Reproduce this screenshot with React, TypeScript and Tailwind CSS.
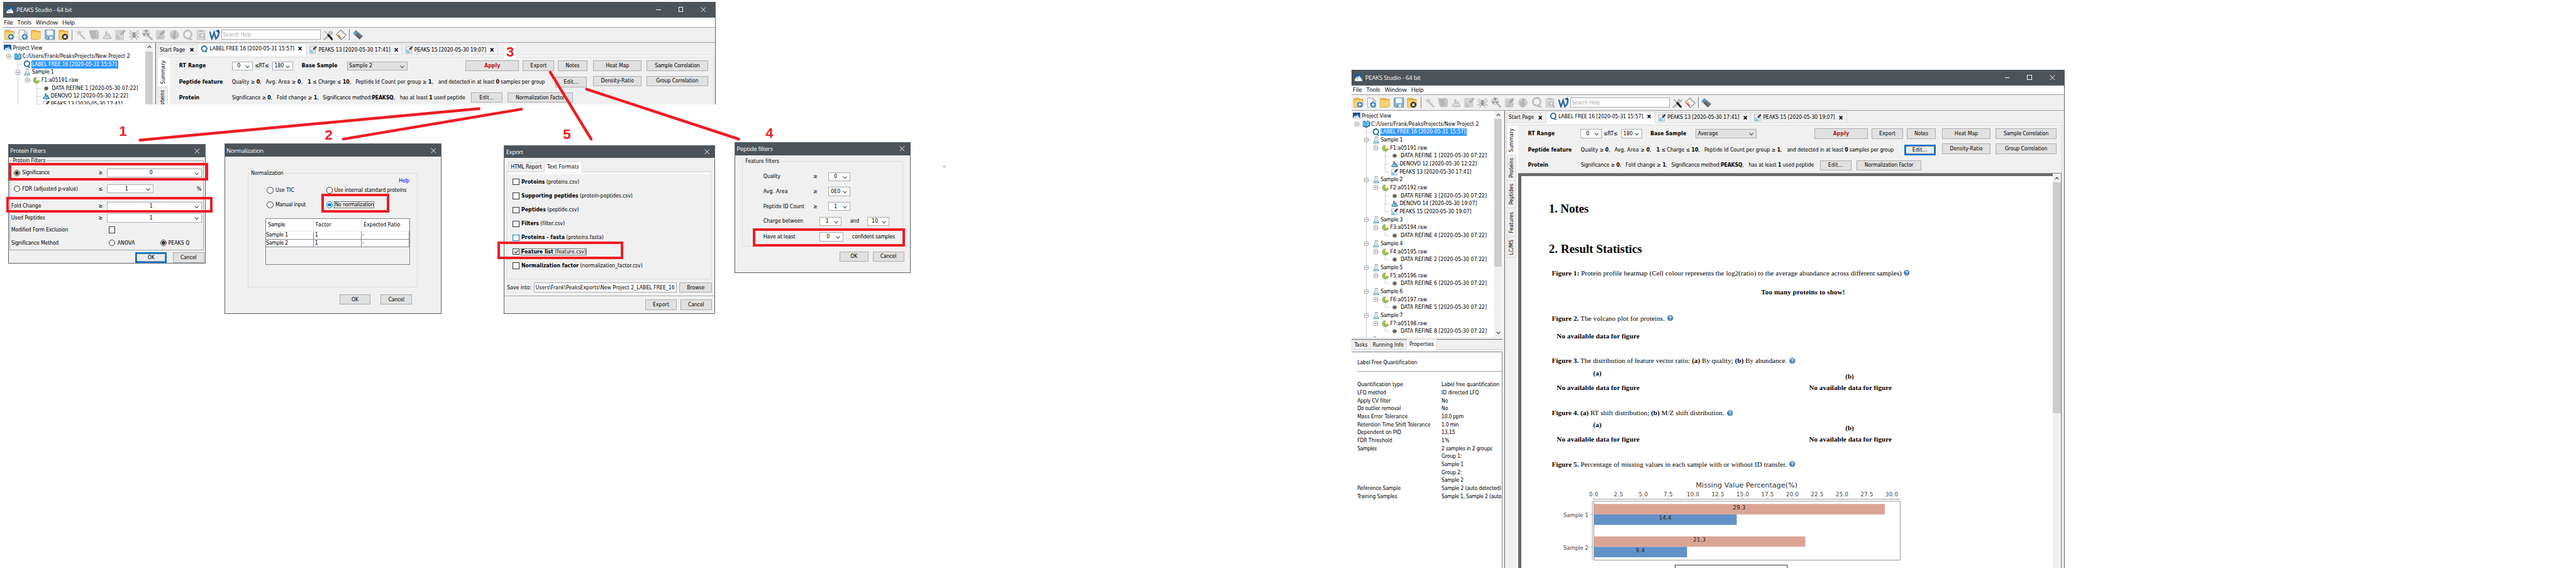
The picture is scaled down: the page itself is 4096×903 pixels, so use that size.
import React, { useLayoutEffect, useRef } from "react";

/* ---------- text ---------- */

// Text set to a given width by adjusting its tracking.
function T({ w, className = "", children }: { w?: number; className?: string; children: React.ReactNode }) {
  const ref = useRef<HTMLSpanElement>(null);
  useLayoutEffect(() => {
    const el = ref.current;
    const root = document.getElementById("canvas");
    if (!el || !root || !w) return;
    el.style.letterSpacing = "0px";
    const k = root.getBoundingClientRect().width / 5168;
    const natural = el.getBoundingClientRect().width / k;
    const n = (el.textContent || "").length;
    if (n > 1) el.style.letterSpacing = `${(w - natural) / n}px`;
  }, [w, children]);
  return (
    <span ref={ref} className={`inline-block shrink-0 whitespace-pre ${className}`}>
      {children}
    </span>
  );
}

/* ---------- small controls ---------- */

function Chevron() {
  return (
    <svg width="9" height="6" viewBox="0 0 9 6" className="mt-[3px] mr-[5px] shrink-0">
      <path d="M0.8 0.8 L4.5 4.6 L8.2 0.8" fill="none" stroke="#444" strokeWidth="1.3" />
    </svg>
  );
}

function Combo({ className, value, grey, left }: { className: string; value: string; grey?: boolean; left?: boolean }) {
  return (
    <div className={`flex h-[18px] shrink-0 items-center border border-[#abadb3] ${grey ? "bg-[#e1e1e1]" : "bg-white"} ${className}`}>
      <span className={`grow whitespace-nowrap ${left ? "pl-[3px]" : "text-center"}`}>{value}</span>
      <Chevron />
    </div>
  );
}

function Btn({ className, children, focus }: { className: string; children: React.ReactNode; focus?: boolean }) {
  if (focus)
    return (
      <div className={`flex h-[21px] shrink-0 border-[2.6px] border-[#0078d7] bg-[#e5edf5] ${className}`}>
        <div className="flex grow items-center justify-center border border-dotted border-black">{children}</div>
      </div>
    );
  return (
    <div className={`flex h-[21px] shrink-0 items-center justify-center border border-[#adadad] bg-[#e1e1e1] ${className}`}>{children}</div>
  );
}

function Radio({ on, blue }: { on?: boolean; blue?: boolean }) {
  return (
    <span className={`flex h-[13px] w-[13px] shrink-0 items-center justify-center rounded-full border bg-white ${blue ? "border-[#0078d7]" : "border-[#333]"}`}>
      {on && <span className={`h-[7px] w-[7px] rounded-full ${blue ? "bg-[#0078d7]" : "bg-[#333]"}`} />}
    </span>
  );
}

function Check({ on, blue }: { on?: boolean; blue?: boolean }) {
  return (
    <span className={`flex h-[13px] w-[13px] shrink-0 items-center justify-center border bg-white ${blue ? "border-[#0078d7]" : "border-[#333]"}`}>
      {on && (
        <svg width="10" height="8" viewBox="0 0 10 8" className="shrink-0">
          <path d="M0.8 4 L3.6 6.8 L9.4 0.8" fill="none" stroke="#222" strokeWidth="1.5" />
        </svg>
      )}
    </span>
  );
}

function TabX() {
  return (
    <svg width="8" height="8" viewBox="0 0 8 8" className="shrink-0">
      <path d="M1 0.8 L7 7.2 M7 0.8 L1 7.2" stroke="#000" strokeWidth="2.1" />
    </svg>
  );
}

/* ---------- icons ---------- */

function Mountain({ s = 15 }: { s?: number }) {
  return (
    <svg width={s} height={s} viewBox="0 0 16 16" className="shrink-0">
      <rect width="16" height="16" fill="#dce9f2" />
      <path d="M0 0H16V13L10 4L7 8L5 6L0 12Z" fill="#1c5a94" />
      <path d="M0 16L5 8L7 11L10 5L16 16Z" fill="#f2f7fa" />
      <path d="M5 8L7 11L6 13L4 11Z M10 5L12.5 10L10.5 9L9 11Z" fill="#8fb7d4" />
    </svg>
  );
}

function QIcon({ grey, s = 16 }: { grey?: boolean; s?: number }) {
  return (
    <svg width={s} height={s} viewBox="0 0 16 16" className="shrink-0">
      <ellipse cx="7.8" cy="7.2" rx="5.6" ry="5.8" fill="none" stroke={grey ? "#c0c0c0" : "#2b6a97"} strokeWidth="2.6" />
      <path d="M8.5 12.5 Q11 15.4 14.6 14.2" fill="none" stroke={grey ? "#c0c0c0" : "#2f7fa8"} strokeWidth="2.2" />
    </svg>
  );
}

function PeaksIcon({ grey, s = 15 }: { grey?: boolean; s?: number }) {
  return (
    <svg width={s} height={s} viewBox="0 0 16 16" className="shrink-0">
      <rect x="1" y="1.5" width="12" height="14" fill={grey ? "#d6d6d6" : "#f6f9fa"} stroke={grey ? "#c6c6c6" : "#8f9a9f"} />
      <path d="M2 15V8L8 9L10 12L7 15Z" fill={grey ? "#c4c4c4" : "#7cc8ea"} />
      <path d="M5 10L8 7L10 9.4L8.4 12Z" fill={grey ? "#d9d9d9" : "#d9eef8"} />
      <path d="M7 6L14 0L16 2.6L9.5 9.6Z" fill={grey ? "#b4b4b4" : "#474c50"} />
    </svg>
  );
}

function DenovoIcon({ grey, s = 14 }: { grey?: boolean; s?: number }) {
  return (
    <svg width={s} height={s} viewBox="0 0 16 16" className="shrink-0">
      <path d="M0.5 14L3 9L5 10V4Q6 0 8 3V9L11 5L12.5 9L15.5 14Q8 16.5 0.5 14Z" fill={grey ? "#c6c6c6" : "#3787b7"} stroke={grey ? "#bababa" : "#1f5f8b"} strokeWidth="0.6" />
      <path d="M4 13V11H6V13Z M6.5 13V9 M9 13.4V10.2Q10.4 9 11 11V13.4" fill="none" stroke={grey ? "#e8e8e8" : "#d6edf8"} strokeWidth="1.2" />
    </svg>
  );
}

function BookIcon() {
  return (
    <svg width="16" height="15" viewBox="0 0 16 15" className="shrink-0">
      <path d="M1 2L6 1L8 4L11 0L15 3V11L8 15L1 11Z" fill="#2b7fb4" />
      <path d="M1 2Q6 2 7.6 5V13L1 10.6Z" fill="#5eb4e4" />
      <path d="M8.4 5Q10 2 13.6 2V10L8.4 13Z" fill="#79c3ea" />
      <path d="M14 3L15.5 4V11L8 15L1 12" fill="none" stroke="#173f5b" />
    </svg>
  );
}

function FlaskIcon() {
  return (
    <svg width="13" height="14" viewBox="0 0 13 14" className="shrink-0">
      <path d="M3.2 8.5L1 13H12L9.6 8.5Z" fill="#8fdcf8" />
      <path d="M4 0.6H9 M4.8 0.6V5.5L0.8 13.3H12.2L8.2 5.5V0.6" fill="none" stroke="#6b7378" strokeWidth="0.9" />
    </svg>
  );
}

function RawIcon() {
  return (
    <svg width="15" height="14" viewBox="0 0 15 14" className="shrink-0">
      <path d="M7.4 0A7 7 0 1 0 14.5 7.6H7.4Z" fill="#9cbd5c" />
    </svg>
  );
}

function DotIcon() {
  return (
    <svg width="9" height="9" viewBox="0 0 9 9" className="mx-[3px] shrink-0">
      <circle cx="4.5" cy="4.5" r="3.9" fill="#666" />
      <path d="M0.2 4.5H8.8" stroke="#666" strokeWidth="1.6" />
    </svg>
  );
}

function Help() {
  return (
    <svg width="12" height="12" viewBox="0 0 12 12" className="mb-[2px] shrink-0">
      <circle cx="6" cy="6" r="6" fill="#4d85b8" />
      <path d="M4.1 4.5Q4.2 2.7 6 2.7T7.9 4.4Q7.9 5.4 6.8 6T6.1 7.4M6.1 8.4V9.9" fill="none" stroke="#fff" strokeWidth="1.4" />
    </svg>
  );
}

function ToolIcon({ kind, className }: { kind: string; className: string }) {
  let art: React.ReactNode = null;
  const folder = (
    <>
      <path d="M1 3Q1 1.5 2.5 1.5H11L13 3.5H19V18.5Q10 21 1 19.5Z" fill="#f0b83c" stroke="#b98420" strokeWidth="0.8" />
      <path d="M1.5 6Q10 4 18.5 6V18.5Q10 20 1.5 19Z" fill="#fbd36e" />
    </>
  );
  const plus = (
    <>
      <circle cx="13" cy="14.5" r="6" fill="#2f6fb0" stroke="#e8f1f9" strokeWidth="0.8" />
      <path d="M13 11V18M9.5 14.5H16.5" stroke="#fff" strokeWidth="2.2" />
    </>
  );
  if (kind === "open") art = <>{folder}{plus}</>;
  if (kind === "new")
    art = (
      <>
        <path d="M2 1H12L18 7V20H2Z" fill="#fafafa" stroke="#888" strokeWidth="0.9" />
        <path d="M12 1V7H18Z" fill="#ddd" stroke="#888" strokeWidth="0.7" />
        {plus}
      </>
    );
  if (kind === "folder") art = folder;
  if (kind === "save")
    art = (
      <>
        <path d="M1 1H20V20H3L1 18Z" fill="#8cb9da" stroke="#39688c" strokeWidth="0.9" />
        <rect x="4.5" y="1.5" width="12" height="9.5" fill="#f4f8fa" />
        <rect x="5.5" y="13.5" width="10" height="6.5" fill="#e4e8ea" stroke="#5a7b91" strokeWidth="0.6" />
        <rect x="7" y="14.5" width="2.4" height="5" fill="#3f6d8f" />
      </>
    );
  if (kind === "close")
    art = (
      <>
        {folder}
        <circle cx="13" cy="14.5" r="6" fill="#33332c" />
        <path d="M10.6 12.1L15.4 16.9M15.4 12.1L10.6 16.9" stroke="#fff" strokeWidth="2.1" />
      </>
    );
  if (kind === "wand")
    art = (
      <>
        <path d="M8 8L19 19" stroke="#bdbdbd" strokeWidth="3" />
        <path d="M7 0L9 4L14 3L11 7L13 11L8 9.5L4 12L4.5 7.5L1 4.5L5.5 4Z" fill="#cccccc" />
      </>
    );
  if (kind === "books")
    art = (
      <>
        <path d="M1 3L5 1L9 14V20L5 17Z M6 3L10 1L13 14V20L9.5 17Z M11 3L15 1L17 13V19L14 17Z" fill="#bbb" stroke="#a4a4a4" strokeWidth="0.6" />
        <path d="M15 1L20 4V17L17 20L13 5Z" fill="#c9c9c9" stroke="#a9a9a9" strokeWidth="0.6" />
      </>
    );
  if (kind === "spider")
    art = (
      <>
        <ellipse cx="10.5" cy="12" rx="3.2" ry="4.4" fill="#9a9a9a" />
        <circle cx="10.5" cy="6.8" r="2.3" fill="#9a9a9a" />
        <path d="M9 8L5 5L2 2M12 8L16 5L19 2M8 10L4 9L0 6.5M13 10L17 9L21 6.5M8 12.5L4 13L0.5 16M13 12.5L17 13L20.5 16M9 15L6 17L5 20.5M12 15L15 17L16 20.5" fill="none" stroke="#9a9a9a" strokeWidth="1.3" />
      </>
    );
  if (kind === "radio")
    art = (
      <>
        <path d="M12 12L19.5 19.5" stroke="#b3b3b3" strokeWidth="3.6" strokeLinecap="round" />
        <circle cx="8" cy="7.5" r="7" fill="#d9d9d9" stroke="#bdbdbd" />
        <path d="M8 7.5L4.6 1.8A6.6 6.6 0 0 1 11.4 1.8ZM8 7.5L1.4 8A6.6 6.6 0 0 0 4.6 13.2ZM8 7.5L14.6 8A6.6 6.6 0 0 1 11.4 13.2Z" fill="#9c9c9c" />
      </>
    );
  if (kind === "ptm")
    art = (
      <>
        <rect x="1" y="2" width="17" height="18" fill="#d0d0d0" />
        <path d="M8 9L16 1L20 4L12 13Z" fill="#aaa" />
        <path d="M3 18L8 11L14 16L10 20Z M14 20V13H20" fill="#bdbdbd" stroke="#c8c8c8" />
      </>
    );
  if (kind === "music")
    art = (
      <>
        <circle cx="10.5" cy="10.5" r="9.5" fill="#cbcbcb" />
        <path d="M11 2V18Q11 20 9 19M11 3Q14 4 11.5 7Q6 10 6.5 13.5Q8 17 12 16Q15 14 13 11.5Q10 10.5 9.5 13" fill="none" stroke="#a5a5a5" strokeWidth="1.4" />
      </>
    );
  if (kind === "clip")
    art = (
      <>
        <path d="M2 3H17V20H2Z" fill="#e0e0e0" stroke="#bdbdbd" strokeWidth="1.6" />
        <rect x="6" y="1" width="7" height="4" fill="#bdbdbd" />
        <circle cx="12" cy="12" r="3.8" fill="#ececec" stroke="#adadad" strokeWidth="1.5" />
        <path d="M14.5 15L19 20M5 9H8M5 12H7M5 15H8" stroke="#b3b3b3" strokeWidth="1.8" />
      </>
    );
  if (kind === "w")
    art = (
      <>
        <path d="M0.5 4L5 18.5L9.5 6L13 18.5Q21 11 17.5 3" fill="none" stroke="#2a6d9e" strokeWidth="3.1" />
        <path d="M11.5 3L18.5 0L21 6.5L17.5 4.8Z" fill="#1a4f7b" />
      </>
    );
  if (kind === "tools")
    art = (
      <>
        <path d="M2 19.5L12 9.5Q11 5 15 2.5L16 6L19 5.5L20 3Q22 9 15 11L5 20.5Z" fill="#c9c9c9" stroke="#6f6f6f" strokeWidth="0.7" />
        <path d="M4 3L12 12" stroke="#999" strokeWidth="1.6" />
        <path d="M11.5 11L19 19.5" stroke="#1f1f1f" strokeWidth="4" strokeLinecap="round" />
      </>
    );
  if (kind === "eraser")
    art = (
      <>
        <path d="M10 1L20.5 11L11 20.5L1 9.5Z" fill="#fbfbfb" stroke="#333" strokeWidth="1.1" />
        <path d="M5 9.5L11 16.5L9.5 18L3.5 11Z" fill="#e8503a" />
        <path d="M6.2 8.2L8 10L6 13L4 11Z" fill="#f5b93a" />
        <path d="M10 4L17.5 11" stroke="#888" strokeWidth="0.7" />
      </>
    );
  if (kind === "calc")
    art = (
      <>
        <path d="M6 1.5L20 13L13.5 20L1 8Z" fill="#8d9499" stroke="#5b6267" strokeWidth="0.7" />
        <path d="M6.2 3L9.5 5.6L4.4 10.2L2 8Z" fill="#4da0dc" />
        <path d="M10.2 6.5L18.5 13.2L13.4 18.6L5.4 11Z" fill="#4a5257" />
        <path d="M8.4 9.3L15.6 16M10.6 7.6L17.4 13.8M9 13L13.4 8.6M11.8 15.6L16.2 11.2" stroke="#b9c0c4" strokeWidth="0.7" />
      </>
    );
  if (kind === "q") return <span className={className}><QIcon grey s={22} /></span>;
  if (kind === "peaks") return <span className={className}><PeaksIcon grey s={21} /></span>;
  if (kind === "denovo") return <span className={className}><DenovoIcon grey s={19} /></span>;
  return (
    <svg width="21" height="21" viewBox="0 0 21 21" className={`shrink-0 ${className}`}>
      {art}
    </svg>
  );
}

/* ---------- project tree ---------- */

function TreeCell({ kind }: { kind: string }) {
  const dash = { stroke: "#777", strokeWidth: 1, strokeDasharray: "1 1.4" };
  const box = "bBE".includes(kind);
  return (
    <svg width="19" height="16" viewBox="0 0 19 16" className="shrink-0">
      {"|TLBE".includes(kind) && <path d="M9.5 0V8" {...dash} />}
      {"|TB".includes(kind) && <path d="M9.5 8V16" {...dash} />}
      {"TLBEb".includes(kind) && <path d="M9.5 8.5H19" {...dash} />}
      {box && <rect x="5.5" y="4" width="8" height="8" rx="1" fill="#f7f7f7" stroke="#8e8f8f" />}
      {box && <path d="M7.3 8H11.7" stroke="#3c4f9a" />}
    </svg>
  );
}

type Row = { cells: string; icon: string; text: string; w: number; on?: boolean };
const leaf = (text: string, w: number, icon: string, last: boolean): Row => ({ cells: last ? " | L" : " | T", icon, text, w });
const sample = (n: number): Row => ({ cells: " B", icon: "flask", text: `Sample ${n}`, w: 44 });
const raw = (text: string): Row => ({ cells: " |E", icon: "raw", text, w: 74 });
const TREE: Row[] = [
  { cells: "b", icon: "book", text: "C:/Users/Frank/PeaksProjects/New Project 2", w: 216 },
  { cells: " T", icon: "q", text: "LABEL FREE 16 [2020-05-31 15:57]", w: 170, on: true },
  sample(1),
  raw("F1:a05191.raw"),
  leaf("DATA REFINE 1 [2020-05-30 07:22]", 173, "dot", false),
  leaf("DENOVO 12 [2020-05-30 12:22]", 155, "denovo", false),
  leaf("PEAKS 13 [2020-05-30 17:41]", 144, "peaks", true),
  sample(2),
  raw("F2:a05192.raw"),
  leaf("DATA REFINE 3 [2020-05-30 07:22]", 173, "dot", false),
  leaf("DENOVO 14 [2020-05-30 19:07]", 155, "denovo", false),
  leaf("PEAKS 15 [2020-05-30 19:07]", 144, "peaks", true),
  sample(3),
  raw("F3:a05194.raw"),
  leaf("DATA REFINE 4 [2020-05-30 07:22]", 173, "dot", true),
  sample(4),
  raw("F4:a05195.raw"),
  leaf("DATA REFINE 2 [2020-05-30 07:22]", 173, "dot", true),
  sample(5),
  raw("F5:a05196.raw"),
  leaf("DATA REFINE 6 [2020-05-30 07:22]", 173, "dot", true),
  sample(6),
  raw("F6:a05197.raw"),
  leaf("DATA REFINE 5 [2020-05-30 07:22]", 173, "dot", true),
  sample(7),
  raw("F7:a05198.raw"),
  leaf("DATA REFINE 8 [2020-05-30 07:22]", 173, "dot", true),
];

function Tree({ rows }: { rows: Row[] }) {
  return (
    <div className="grow overflow-hidden pt-[3px]">
      <div className="flex h-[16px] items-center gap-[3px] pl-[2px]">
        <Mountain />
        <T w={59}>Project View</T>
      </div>
      {rows.map((r, i) => (
        <div key={i} className="flex h-[16px] items-center pl-[1px]">
          {r.cells.split("").map((c, k) => (
            <TreeCell key={k} kind={c} />
          ))}
          <span className="ml-[1px] flex w-[17px] shrink-0 items-center justify-center">
            {r.icon === "book" && <BookIcon />}
            {r.icon === "q" && <QIcon s={15} />}
            {r.icon === "flask" && <FlaskIcon />}
            {r.icon === "raw" && <RawIcon />}
            {r.icon === "dot" && <DotIcon />}
            {r.icon === "denovo" && <DenovoIcon />}
            {r.icon === "peaks" && <PeaksIcon s={14} />}
          </span>
          <span className={`flex h-[16px] items-center pr-[3px] ${r.icon === "dot" ? "pl-[3px]" : "pl-[1px]"} ${r.on ? "bg-[#3399ff] text-white" : ""}`}>
            <T w={r.w}>{r.text}</T>
          </span>
        </div>
      ))}
      <div className="flex h-[4px] overflow-hidden pl-[1px]">
        <TreeCell kind=" " />
        <TreeCell kind="|" />
        <span className="mt-[2px] ml-[5px] h-[4px] w-[5px] bg-[#888]" />
      </div>
    </div>
  );
}

const PROPS: [string, number, string, number][] = [
  ["Quantification type", 92, "Label free quantification", 116],
  ["LFQ method", 58, "ID directed LFQ", 75],
  ["Apply CV filter", 67, "No", 13],
  ["Do outlier removal", 87, "No", 13],
  ["Mass Error Tolerance", 101, "10.0 ppm", 44],
  ["Retention Time Shift Tolerance", 147, "1.0 min", 34],
  ["Dependent on PID", 88, "13,15", 27],
  ["FDR Threshold", 70, "1%", 16],
  ["Samples", 39, "2 samples in 2 groups", 102],
  ["", 0, "Group 1:", 41],
  ["", 0, "Sample 1", 44],
  ["", 0, "Group 2:", 41],
  ["", 0, "Sample 2", 44],
  ["Reference Sample", 87, "Sample 2 (auto detected)", 120],
  ["Training Samples", 80, "Sample 1, Sample 2 (auto", 120],
];

function LeftPane({ compact }: { compact?: boolean }) {
  return (
    <div className="flex w-[302px] shrink-0 flex-col">
      <div className={`flex shrink-0 bg-white ${compact ? "h-[124px]" : "h-[454px]"}`}>
        <Tree rows={compact ? TREE.slice(0, 7) : TREE} />
        <div className="flex w-[15px] shrink-0 flex-col items-center bg-[#f0f0f0]">
          <div className="flex h-[17px] shrink-0 items-center">
            <svg width="9" height="6" viewBox="0 0 9 6"><path d="M1 5L4.5 1.4L8 5" fill="none" stroke="#505050" strokeWidth="1.7" /></svg>
          </div>
          <div className={`w-full bg-[#cdcdcd] ${compact ? "grow" : "h-[296px]"}`} />
          {!compact && (
            <div className="mt-auto flex h-[17px] items-center">
              <svg width="9" height="6" viewBox="0 0 9 6"><path d="M1 1L4.5 4.6L8 1" fill="none" stroke="#505050" strokeWidth="1.7" /></svg>
            </div>
          )}
        </div>
        <div className="w-[1px] shrink-0 bg-white" />
      </div>
      {!compact && (
        <>
          <div className="mt-[4px] h-[1px] shrink-0 bg-[#696969]" />
          <div className="flex h-[21px] shrink-0 items-end border-b border-[#d9d9d9] pt-[1px]">
            <div className="flex h-[18px] w-[37px] items-center justify-center border-t border-r border-l border-[#d9d9d9]"><T w={27}>Tasks</T></div>
            <div className="flex h-[18px] w-[72px] items-center justify-center border-t border-[#d9d9d9]"><T w={62}>Running Info</T></div>
            <div className="-mb-[1px] flex h-[21px] w-[62px] items-start justify-center border-t border-r border-l border-[#d9d9d9] bg-white pt-[2px]"><T w={49}>Properties</T></div>
          </div>
          <div className="mt-[3px] grow overflow-hidden border-t border-r border-[#828790] bg-white pl-[11px]">
            <div className="flex h-[40px] items-center border-b border-[#a0a0a0] pt-[5px]"><T w={120}>Label Free Quantification</T></div>
            <div className="mt-[18px]">
              {PROPS.map(([a, wa, b, wb], i) => (
                <div key={i} className="flex h-[16px] items-center">
                  <span className="w-[169px] shrink-0">{a && <T w={wa}>{a}</T>}</span>
                  <T w={wb}>{b}</T>
                </div>
              ))}
            </div>
          </div>
        </>
      )}
    </div>
  );
}

/* ---------- report ---------- */

function NoData() {
  return (
    <div className="flex h-[20px] pl-[71px] font-bold">
      <span className="w-[506px]"><T w={166}>No available data for figure</T></span>
      <T w={166}>No available data for figure</T>
    </div>
  );
}

function AB() {
  return (
    <div className="flex h-[26px] pl-[144px] font-bold">
      <span className="w-[506px]"><T w={17}>(a)</T></span>
      <span className="pt-[6px]"><T w={17}>(b)</T></span>
    </div>
  );
}

function Chart() {
  const ticks = [0, 2.5, 5, 7.5, 10, 12.5, 15, 17.5, 20, 22.5, 25, 27.5, 30];
  const x = (v: number) => 145 + v * 19.94;
  const bars = [
    { y: 52, v: 29.3, c: "#dba596" },
    { y: 73, v: 14.4, c: "#6292c8" },
    { y: 117, v: 21.3, c: "#dba596" },
    { y: 138, v: 9.4, c: "#6292c8" },
  ];
  return (
    <svg width="1060" height="183" viewBox="0 0 1060 183" className="mt-[17px] [font-family:'DejaVu_Sans_Condensed','Noto_Sans',sans-serif]">
      <text x="452" y="19" textAnchor="middle" fontSize="14" fill="#333" textLength="204" className="[font-family:'DejaVu_Sans',sans-serif]">Missing Value Percentage(%)</text>
      {ticks.map((t) => (
        <g key={t}>
          <text x={x(t)} y="36.5" textAnchor="middle" fontSize="12" fill="#444" textLength={t < 10 ? 18 : 25}>{t.toFixed(1)}</text>
          <path d={`M${x(t)} 40V42.5`} stroke="#808080" />
        </g>
      ))}
      <path d="M145 42.5H760" stroke="#808080" />
      <path d="M142.5 46V164 M139.5 73.5H142.5 M139.5 138H142.5" stroke="#808080" />
      <rect x="145.5" y="46.5" width="614.5" height="118" fill="#fff" stroke="#808080" />
      {bars.map((b) => (
        <g key={b.v}>
          <rect x="146" y={b.y} width={x(b.v) - 146} height="21" fill={b.c} />
          <text x={(145 + x(b.v)) / 2} y={b.y + 10.5} textAnchor="middle" fontSize="12" fill="#222" textLength={b.v < 10 ? 18 : 25}>{b.v.toFixed(1)}</text>
        </g>
      ))}
      <text x="134.5" y="78.5" textAnchor="end" fontSize="12" fill="#444" textLength="50">Sample 1</text>
      <text x="134.5" y="143.5" textAnchor="end" fontSize="12" fill="#444" textLength="50">Sample 2</text>
      <rect x="308.5" y="174.5" width="225" height="30" fill="#fff" stroke="#000" />
    </svg>
  );
}

function Report() {
  return (
    <div className="flex grow overflow-hidden border-t border-r border-[#828790] bg-white">
      <div className="grow overflow-hidden bg-[#696969] pt-[5px] pl-[6px]">
        <div className="h-full bg-white text-[14px] leading-[20px] text-black [font-family:'Liberation_Serif','Times_New_Roman',serif]">
          <div className="flex h-[79px] items-end pl-[55px] text-[24px] leading-[28px] font-bold"><T w={80}>1. Notes</T></div>
          <div className="flex h-[81px] items-end pl-[55px] text-[24px] leading-[28px] font-bold"><T w={187}>2. Result Statistics</T></div>
          <div className="mt-[25px] flex h-[20px] items-center gap-[4px] pl-[61px]">
            <T w={702}><b>Figure 1:</b> Protein profile heatmap (Cell colour represents the log2(ratio) to the average abundance across different samples)</T>
            <Help />
          </div>
          <div className="mt-[18px] pl-[481px] font-bold"><T w={168}>Too many proteins to show!</T></div>
          <div className="mt-[33px] flex h-[20px] items-center gap-[5px] pl-[61px]">
            <T w={227}><b>Figure 2.</b> The volcano plot for proteins.</T>
            <Help />
          </div>
          <div className="mt-[15px] pl-[71px] font-bold"><T w={166}>No available data for figure</T></div>
          <div className="mt-[30px] flex h-[20px] items-center gap-[5px] pl-[61px]">
            <T w={472}><b>Figure 3.</b> The distribution of feature vector ratio: <b>(a)</b> By quality; <b>(b)</b> By abundance.</T>
            <Help />
          </div>
          <div className="mt-[5px]"><AB /></div>
          <div className="mt-[3px]"><NoData /></div>
          <div className="mt-[31px] flex h-[20px] items-center gap-[5px] pl-[61px]">
            <T w={346}><b>Figure 4.</b> <b>(a)</b> RT shift distribution; <b>(b)</b> M/Z shift distribution.</T>
            <Help />
          </div>
          <div className="mt-[4px]"><AB /></div>
          <div className="mt-[3px]"><NoData /></div>
          <div className="mt-[30px] flex h-[20px] items-center gap-[5px] pl-[61px]">
            <T w={472}><b>Figure 5.</b> Percentage of missing values in each sample with or without ID transfer.</T>
            <Help />
          </div>
          <Chart />
        </div>
      </div>
      <div className="flex w-[17px] shrink-0 flex-col items-center bg-[#f0f0f0]">
        <div className="flex h-[17px] items-center">
          <svg width="9" height="6" viewBox="0 0 9 6"><path d="M1 5L4.5 1.4L8 5" fill="none" stroke="#505050" strokeWidth="1.7" /></svg>
        </div>
        <div className="h-[464px] w-full bg-[#cdcdcd]" />
      </div>
    </div>
  );
}

/* ---------- main window ---------- */

function Filters({ base, focus }: { base: string; focus?: boolean }) {
  return (
    <div className="flex h-[96px] shrink-0">
      <div className="w-[850px] shrink-0 pl-[19px]">
        <div className="flex h-[34px] items-center">
          <span className="w-[106px]"><T w={54} className="font-bold">RT Range</T></span>
          <Combo className="w-[42px]" value="0" />
          <T w={28} className="mx-[4px]">≤RT≤</T>
          <Combo className="ml-[3px] w-[42px]" value="180" />
          <T w={72} className="ml-[17px] font-bold">Base Sample</T>
          <Combo className="ml-[19px] w-[122px]" value={base} grey left />
          <Btn className="ml-[116px] w-[107px]"><T w={32} className="font-bold text-[#b61e1e]">Apply</T></Btn>
          <Btn className="ml-[8px] w-[63px]"><T w={33}>Export</T></Btn>
          <Btn className="ml-[7px] w-[59px]"><T w={28}>Notes</T></Btn>
        </div>
        <div className="flex h-[31px] items-center">
          <span className="w-[106px]"><T w={88} className="font-bold">Peptide feature</T></span>
          <T w={59}>Quality ≥ <b>0</b>,</T>
          <T w={74} className="ml-[9px]">Avg. Area ≥ <b>0</b>,</T>
          <T w={87} className="ml-[10px]"><b>1</b> ≤ Charge ≤ <b>10</b>,</T>
          <T w={156} className="ml-[9px]">Peptide Id Count per group ≥ <b>1</b>,</T>
          <T w={214} className="ml-[10px]">and detected in at least <b>0</b> samples per group</T>
          <span className="grow" />
          <Btn className="mr-[13px] w-[63px]" focus={focus}><T w={30}>Edit...</T></Btn>
        </div>
        <div className="flex h-[31px] items-center">
          <span className="w-[106px]"><T w={41} className="font-bold">Protein</T></span>
          <T w={81}>Significance ≥ <b>0</b>,</T>
          <T w={84} className="ml-[9px]">Fold change ≥ <b>1</b>,</T>
          <T w={145} className="ml-[8px]">Significance method:<b>PEAKSQ</b>,</T>
          <T w={131} className="ml-[10px]">has at least <b>1</b> used peptide</T>
          <Btn className="ml-[12px] w-[63px]"><T w={30}>Edit...</T></Btn>
          <Btn className="ml-[10px] w-[131px]"><T w={98}>Normalization Factor</T></Btn>
        </div>
      </div>
      <div className="grid grid-cols-[97px_123px] content-start gap-[10px] pt-[6px]">
        <Btn className=""><T w={47}>Heat Map</T></Btn>
        <Btn className=""><T w={90}>Sample Correlation</T></Btn>
        <Btn className=""><T w={66}>Density-Ratio</T></Btn>
        <Btn className=""><T w={85}>Group Correlation</T></Btn>
      </div>
    </div>
  );
}

function SideTab({ className, children }: { className: string; children: React.ReactNode }) {
  return (
    <div className={`flex shrink-0 items-center justify-center ${className}`}>
      <span className="rotate-180 [writing-mode:vertical-rl]">{children}</span>
    </div>
  );
}

function StudioWindow({ className, base, focus, compact }: { className: string; base: string; focus?: boolean; compact?: boolean }) {
  return (
    <div className={`absolute flex w-[1430px] flex-col overflow-hidden border-r border-[#59646a] bg-[#f0f0f0] ${className}`}>
      <div className="flex h-[31px] shrink-0 items-center bg-[#4c545a] pl-[6px] text-white">
        <Mountain />
        <T w={111} className="ml-[6px] text-[12px] [font-family:'Open_Sans',sans-serif]">PEAKS Studio - 64 bit</T>
        <span className="ml-auto h-[1.3px] w-[10px] bg-white" />
        <span className="ml-[35px] h-[10px] w-[10px] border border-white" />
        <svg width="11" height="11" viewBox="0 0 11 11" className="mr-[18px] ml-[35px]"><path d="M0.7 0.7L10.3 10.3M10.3 0.7L0.7 10.3" stroke="#fff" strokeWidth="1.2" /></svg>
      </div>
      <div className="flex h-[20px] shrink-0 items-center gap-[9px] border-b border-[#a0a0a0] bg-white pl-[2px] text-[12px] [font-family:'Open_Sans',sans-serif]">
        <T w={18}>File</T>
        <T w={28}>Tools</T>
        <T w={44}>Window</T>
        <T w={25}>Help</T>
      </div>
      <div className="flex h-[31px] shrink-0 items-center border-b border-[#a0a0a0] pl-[3px]">
        <ToolIcon kind="open" className="" />
        <ToolIcon kind="new" className="ml-[6px]" />
        <ToolIcon kind="folder" className="ml-[5px]" />
        <ToolIcon kind="save" className="ml-[7px]" />
        <ToolIcon kind="close" className="ml-[6px]" />
        <span className="ml-[6px] h-[22px] w-[1.3px] bg-[#888]" />
        <ToolIcon kind="wand" className="ml-[6px]" />
        <ToolIcon kind="books" className="ml-[6px]" />
        <ToolIcon kind="denovo" className="ml-[7px]" />
        <ToolIcon kind="peaks" className="ml-[6px]" />
        <ToolIcon kind="spider" className="ml-[6px]" />
        <ToolIcon kind="radio" className="ml-[6px]" />
        <ToolIcon kind="ptm" className="ml-[6px]" />
        <ToolIcon kind="music" className="ml-[6px]" />
        <ToolIcon kind="q" className="ml-[6px]" />
        <ToolIcon kind="clip" className="ml-[6px]" />
        <ToolIcon kind="w" className="ml-[5px]" />
        <div className="ml-[3px] flex h-[20px] w-[200px] shrink-0 items-center border border-[#abadb3] bg-white text-[#b0b0b0]"><T w={57} className="ml-[2px]">Search Help</T></div>
        <ToolIcon kind="tools" className="ml-[3px]" />
        <ToolIcon kind="eraser" className="ml-[6px]" />
        <span className="ml-[5px] h-[23px] w-[1.3px] bg-[#888]" />
        <ToolIcon kind="calc" className="ml-[6px]" />
      </div>
      <div className="flex grow overflow-hidden">
        <LeftPane compact={compact} />
        <div className="ml-[4px] w-[1.3px] shrink-0 bg-[#696969]" />
        <div className="flex grow flex-col overflow-hidden pr-[3px] pl-[2px]">
          <div className="flex h-[25px] shrink-0 items-end border-b border-[#d9d9d9]">
            <div className="flex h-[21px] w-[80px] shrink-0 items-center border-t border-l border-[#d9d9d9] pl-[4px]">
              <T w={51}>Start Page</T>
              <span className="ml-[9px]"><TabX /></span>
            </div>
            <div className="-mb-[1px] flex h-[24px] w-[220px] shrink-0 items-center border-t border-r border-l border-[#d9d9d9] bg-white pb-[3px] pl-[6px]">
              <QIcon s={15} />
              <T w={170} className="ml-[3px]">LABEL FREE 16 [2020-05-31 15:57]</T>
              <span className="ml-[8px]"><TabX /></span>
            </div>
            <div className="flex h-[21px] w-[192px] shrink-0 items-center border-t border-r border-[#d9d9d9] pl-[6px]">
              <PeaksIcon s={15} />
              <T w={144} className="ml-[3px]">PEAKS 13 [2020-05-30 17:41]</T>
              <span className="ml-[8px]"><TabX /></span>
            </div>
            <div className="flex h-[21px] w-[192px] shrink-0 items-center border-t border-r border-[#d9d9d9] pl-[6px]">
              <PeaksIcon s={15} />
              <T w={144} className="ml-[3px]">PEAKS 15 [2020-05-30 19:07]</T>
              <span className="ml-[8px]"><TabX /></span>
            </div>
          </div>
          <div className="h-[3px] shrink-0 bg-white" />
          <div className="flex grow overflow-hidden border-t border-r border-[#d9d9d9]">
            <div className="flex w-[25px] shrink-0 flex-col">
              <SideTab className="h-[59px] w-[25px] border-l border-[#d9d9d9] bg-white pr-[3px]">Summary</SideTab>
              <div className="flex grow flex-col border-r-[4px] border-white pl-[2px]">
                <SideTab className="h-[53px] border border-[#d9d9d9]">Proteins</SideTab>
                {!compact && (
                  <>
                    <SideTab className="h-[55px] border border-t-0 border-[#d9d9d9]">Peptides</SideTab>
                    <SideTab className="h-[57px] border border-t-0 border-[#d9d9d9]">Features</SideTab>
                    <SideTab className="h-[42px] border border-t-0 border-[#d9d9d9]">LC/MS</SideTab>
                  </>
                )}
              </div>
            </div>
            <div className="flex grow flex-col overflow-hidden">
              <Filters base={base} focus={focus} />
              {!compact && <Report />}
            </div>
          </div>
        </div>
      </div>
    </div>
  );
}

/* ---------- dialogs ---------- */

function Dialog({ className, title, w, children }: { className: string; title: string; w: number; children: React.ReactNode }) {
  return (
    <div className={`absolute flex flex-col border border-[#59646a] bg-[#f0f0f0] ${className}`}>
      <div className="flex h-[25px] shrink-0 items-center justify-between bg-[#4c545a] pr-[10px] pl-[3px] text-white">
        <T w={w} className="text-[12px] [font-family:'Open_Sans',sans-serif]">{title}</T>
        <svg width="11" height="11" viewBox="0 0 11 11"><path d="M0.7 0.7L10.3 10.3M10.3 0.7L0.7 10.3" stroke="#fff" strokeWidth="1.2" /></svg>
      </div>
      {children}
    </div>
  );
}

function ProteinDialog() {
  return (
    <Dialog className="top-[289px] left-[16px] h-[240px] w-[396px]" title="Protein Filters" w={71}>
      <fieldset className="mx-[2px] h-[187px] shrink-0 border border-[#a8a8a8]">
        <legend className="ml-[3px] px-[2px]"><T w={66}>Protein Filters</T></legend>
        <div className="flex h-[35px] items-center">
          <span className="flex w-[177px] items-center gap-[4px] pl-[7px]"><Radio on /><T w={55}>Significance</T></span>
          <span className="w-[17px]">≥</span>
          <Combo className="w-[191px]" value="0" />
        </div>
        <div className="flex h-[29px] items-center">
          <span className="flex w-[177px] items-center gap-[4px] pl-[7px]"><Radio /><T w={112}>FDR (adjusted p-value)</T></span>
          <span className="w-[17px]">≤</span>
          <Combo className="w-[93px]" value="1" />
          <span className="ml-[87px]">%</span>
        </div>
        <div className="mt-[8px] flex h-[25px] items-center">
          <span className="w-[177px] pl-[2px]"><T w={60}>Fold Change</T></span>
          <span className="w-[17px]">≥</span>
          <Combo className="w-[191px]" value="1" />
        </div>
        <div className="flex h-[22px] items-center">
          <span className="w-[177px] pl-[2px]"><T w={68}>Used Peptides</T></span>
          <span className="w-[17px]">≥</span>
          <Combo className="w-[191px]" value="1" />
        </div>
        <div className="flex h-[26px] items-center">
          <span className="w-[198px] pl-[2px]"><T w={114}>Modified Form Exclusion</T></span>
          <Check />
        </div>
        <div className="flex h-[26px] items-center">
          <span className="w-[198px] pl-[2px]"><T w={95}>Significance Method</T></span>
          <span className="flex w-[103px] items-center gap-[4px]"><Radio /><T w={35}>ANOVA</T></span>
          <span className="flex items-center gap-[3px]"><Radio on /><T w={43}>PEAKS Q</T></span>
        </div>
      </fieldset>
      <div className="mt-[4px] flex justify-end gap-[12px] pr-[1px]">
        <Btn className="w-[63px]" focus><T w={14}>OK</T></Btn>
        <Btn className="w-[63px]"><T w={32}>Cancel</T></Btn>
      </div>
    </Dialog>
  );
}

function NormalizationDialog() {
  const cell = "flex items-center border-r border-b border-[#828790] bg-white";
  const head = "flex items-center border-r border-b border-[#e5e5e5] bg-white pl-[4px]";
  return (
    <Dialog className="top-[288px] left-[450px] h-[342px] w-[436px]" title="Normalization" w={74}>
      <fieldset className="mt-[26px] ml-[46px] h-[236px] w-[341px] shrink-0 border border-[#dcdcdc]">
        <legend className="ml-[3px] px-[2px]"><T w={65}>Normalization</T></legend>
        <div className="flex h-[18px] items-center justify-end pr-[16px] text-[#0000ff]"><T w={21}>Help</T></div>
        <div className="flex h-[19px] items-center pl-[37px]">
          <span className="flex w-[119px] items-center gap-[4px]"><Radio /><T w={38}>Use TIC</T></span>
          <span className="flex items-center gap-[3px]"><Radio /><T w={145}>Use internal standard proteins</T></span>
        </div>
        <div className="mt-[4px] flex h-[31px] items-center pl-[37px]">
          <span className="flex w-[119px] items-center gap-[4px]"><Radio /><T w={61}>Manual input</T></span>
          <span className="flex items-center gap-[3px]"><Radio on blue /><span className="flex h-[14px] items-center border border-dotted border-black"><T w={78}>No normalization</T></span></span>
        </div>
        <div className="mt-[12px] ml-[34px] h-[93px] w-[290px] border border-[#828790]">
          <div className="grid grid-cols-[96px_96px_96px] grid-rows-[25px_16px_16px]">
            <div className={head}><T w={34}>Sample</T></div>
            <div className={head}><T w={31}>Factor</T></div>
            <div className={head}><T w={73}>Expected Ratio</T></div>
            <div className={cell}><T w={44}>Sample 1</T></div>
            <div className={`${cell} pl-[2px]`}>1</div>
            <div className={`${cell} pl-[1px]`}>-</div>
            <div className={cell}><T w={44}>Sample 2</T></div>
            <div className={`${cell} pl-[2px]`}>1</div>
            <div className={`${cell} pl-[1px]`}>-</div>
          </div>
        </div>
      </fieldset>
      <div className="mt-[14px] flex justify-end gap-[20px] pr-[58px]">
        <Btn className="w-[63px]"><T w={14}>OK</T></Btn>
        <Btn className="w-[63px]"><T w={32}>Cancel</T></Btn>
      </div>
    </Dialog>
  );
}

const EXPORTS = [
  { b: "Proteins", bw: 47, t: "(proteins.csv)", tw: 66 },
  { b: "Supporting peptides", bw: 114, t: "(protein-peptides.csv)", tw: 106 },
  { b: "Peptides", bw: 49, t: "(peptide.csv)", tw: 63 },
  { b: "Filters", bw: 35, t: "(filter.csv)", tw: 49 },
  { b: "Proteins - fasta", bw: 87, t: "(proteins.fasta)", tw: 75, blue: true },
  { b: "Feature list", bw: 64, t: "(feature.csv)", tw: 63, on: true },
  { b: "Normalization factor", bw: 115, t: "(normalization_factor.csv)", tw: 125 },
];

function ExportDialog() {
  return (
    <Dialog className="top-[291px] left-[1011px] h-[339px] w-[424px]" title="Export" w={34}>
      <div className="mx-[6px] mt-[6px] flex h-[20px] shrink-0 items-end pl-[1px]">
        <div className="flex h-[18px] w-[72px] items-center justify-center border-t border-l border-[#d9d9d9]"><T w={62}>HTML Report</T></div>
        <div className="relative -mb-[2px] flex h-[22px] w-[77px] justify-center border-t border-r border-l border-[#d9d9d9] bg-white pt-[3px]"><T w={64}>Text Formats</T></div>
      </div>
      <div className="mr-[7px] ml-[5px] h-[217px] shrink-0 border border-[#d9d9d9] pt-[2px]">
        <div className="h-[212px] border-t-[2.6px] border-l border-white pt-[2px] pl-[9px]">
          {EXPORTS.map((e) => (
            <div key={e.b} className="flex h-[28px] items-center">
              <Check on={e.on} blue={e.blue} />
              <span className={`ml-[3px] flex h-[14px] items-center gap-[3px] border border-dotted ${e.on ? "border-black" : "border-transparent"}`}>
                <T w={e.bw} className="font-bold">{e.b}</T>
                <T w={e.tw}>{e.t}</T>
              </span>
            </div>
          ))}
        </div>
      </div>
      <div className="mt-[6px] flex h-[21px] shrink-0 items-center pl-[5px]">
        <T w={49}>Save into:</T>
        <div className="ml-[5px] flex h-[20px] w-[286px] items-center border border-[#abadb3] bg-white pl-[2px]"><T w={279}>Users\Frank\PeaksExports\New Project 2_LABEL FREE_16</T></div>
        <Btn className="ml-[6px] w-[65px]"><T w={35}>Browse</T></Btn>
      </div>
      <div className="mt-[6px] h-[2px] shrink-0 border-t border-[#a0a0a0] bg-white" />
      <div className="mt-[6px] flex justify-end gap-[7px] pr-[6px]">
        <Btn className="w-[63px]"><T w={33}>Export</T></Btn>
        <Btn className="w-[63px]"><T w={32}>Cancel</T></Btn>
      </div>
    </Dialog>
  );
}

function PeptideDialog() {
  return (
    <Dialog className="top-[285px] left-[1474px] h-[263px] w-[353px]" title="Peptide filters" w={72}>
      <fieldset className="mt-[5px] ml-[14px] h-[178px] w-[323px] shrink-0 border border-[#dcdcdc]">
        <legend className="ml-[3px] px-[2px]"><T w={68}>Feature filters</T></legend>
        <div className="mt-[9px] flex h-[30px] items-center pl-[41px]">
          <span className="w-[100px]"><T w={34}>Quality</T></span><span className="w-[30px]">≥</span>
          <Combo className="w-[44px]" value="0" />
        </div>
        <div className="flex h-[30px] items-center pl-[41px]">
          <span className="w-[100px]"><T w={49}>Avg. Area</T></span><span className="w-[30px]">≥</span>
          <Combo className="w-[44px]" value="0E0" />
        </div>
        <div className="flex h-[30px] items-center pl-[41px]">
          <span className="w-[100px]"><T w={82}>Peptide ID Count</T></span><span className="w-[30px]">≥</span>
          <Combo className="w-[44px]" value="1" />
        </div>
        <div className="flex h-[30px] items-center pl-[41px]">
          <span className="w-[113px]"><T w={80}>Charge between</T></span>
          <Combo className="w-[44px]" value="1" />
          <span className="ml-[17px] w-[34px]"><T w={18}>and</T></span>
          <Combo className="w-[45px]" value="10" />
        </div>
        <div className="flex h-[32px] items-center pl-[41px]">
          <span className="w-[113px]"><T w={64}>Have at least</T></span>
          <Combo className="w-[48px]" value="0" />
          <T w={86} className="ml-[17px]">confident samples</T>
        </div>
      </fieldset>
      <div className="mt-[10px] flex justify-end gap-[8px] pr-[12px]">
        <Btn className="w-[59px]"><T w={14}>OK</T></Btn>
        <Btn className="w-[63px]"><T w={32}>Cancel</T></Btn>
      </div>
    </Dialog>
  );
}

/* ---------- annotations ---------- */

function Num({ className, children }: { className: string; children: string }) {
  return (
    <span className={`absolute flex h-[28px] w-[23px] items-center justify-center bg-white text-[28px] leading-[28px] font-bold text-[#ed1c24] [font-family:'Liberation_Sans',Arial,sans-serif] ${className}`}>
      {children}
    </span>
  );
}

function Frame({ className }: { className: string }) {
  return <div className={`absolute border-[5.1px] border-[#ed1c24] ${className}`} />;
}

export default function App() {
  return (
    <div className="h-[903px] w-[4096px] overflow-hidden bg-white">
      <div id="canvas" className="relative h-[1140px] w-[5168px] overflow-hidden bg-white text-[11px] leading-[14px] text-black [font-family:'DejaVu_Sans_Condensed','Noto_Sans',sans-serif] [zoom:0.79257]">
        <StudioWindow className="top-[4px] left-[6px] h-[206px]" base="Sample 2" compact />
        <StudioWindow className="top-[140px] left-[2712px] h-[1000px]" base="Average" focus />
        <ProteinDialog />
        <NormalizationDialog />
        <ExportDialog />
        <PeptideDialog />
        <Frame className="top-[327px] left-[18px] h-[35px] w-[399px]" />
        <Frame className="top-[395px] left-[12px] h-[31px] w-[415px]" />
        <Frame className="top-[389px] left-[645px] h-[37px] w-[136px]" />
        <Frame className="top-[485px] left-[998px] h-[35px] w-[252px]" />
        <Frame className="top-[458px] left-[1510px] h-[37px] w-[306px]" />
        <Num className="top-[250px] left-[235px]">1</Num>
        <Num className="top-[257px] left-[648px]">2</Num>
        <Num className="top-[91px] left-[1012px]">3</Num>
        <Num className="top-[253px] left-[1532px]">4</Num>
        <Num className="top-[256px] left-[1126px]">5</Num>
        <svg width="1900" height="340" viewBox="0 0 1900 340" className="absolute top-0 left-0">
          <g stroke="#ed1c24" strokeWidth="5.6" strokeLinecap="round" fill="none">
            <path d="M281 281L961 218" />
            <path d="M689 279L1046 219" />
            <path d="M1104 145L1186 279" />
            <path d="M1177 179L1482 279" />
          </g>
          <rect x="1893" y="333" width="2" height="2" fill="#333" />
        </svg>
      </div>
    </div>
  );
}
